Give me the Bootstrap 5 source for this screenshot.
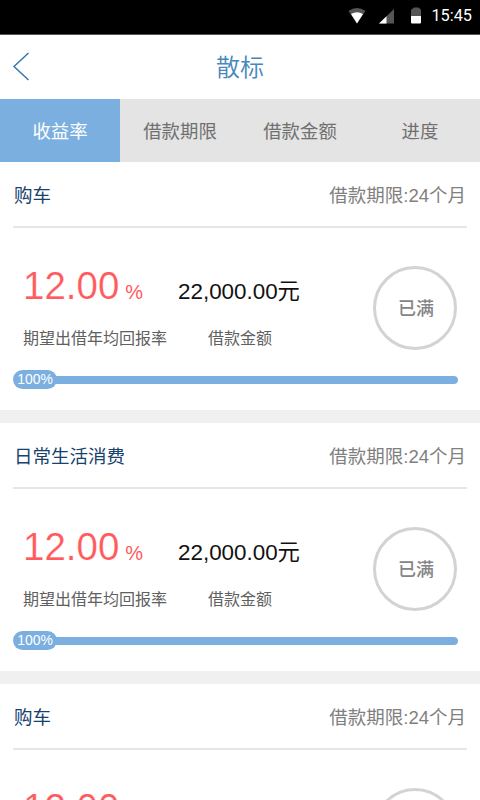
<!DOCTYPE html>
<html lang="zh-CN">
<head>
<meta charset="utf-8">
<meta name="viewport" content="width=device-width, initial-scale=1">
<title>散标</title>
<link href="https://cdn.jsdelivr.net/npm/bootstrap@5.3.0/dist/css/bootstrap.min.css" rel="stylesheet">
<style>
body{font-family:"Liberation Sans","Noto Sans CJK SC",sans-serif;background:#f0f0f0;height:800px;overflow:hidden;line-height:1}
.statusbar{height:35px;background:#000;border-bottom:1px solid #555;padding:0 8px 2px 0;font:400 16.3px/32px Roboto,sans-serif}
.topbar{height:64px;color:#4687bd}
.topbar .back{width:40px}
.topbar h1{font-size:24px;padding:2px 40px 0 0;font-weight:350}
.sort-tabs{height:63px;background:#e4e4e4;font-size:18.4px}
.sort-tabs .nav-link{color:#707070;border-radius:0;padding:3px 0 0}
.sort-tabs .nav-link.active{background:#7bafdf;color:#fff}
main{height:638px;overflow:hidden}
.loan{height:248px;margin-bottom:13px;padding:0 13px}
.loan-head{height:66px;font-size:18.5px;border-bottom:2px solid #e6e6e6;padding:5px 1px 0}
.loan-head .kind{color:#17426c}
.loan-head .term{color:#808080}
.loan-body{height:142px}
.rate{width:155px;color:#ff5a5c;padding:36px 0 0 10px}
.rate .figure{font-size:38.5px;line-height:44px;-webkit-text-stroke:.2px #fff}
.rate .unit{font-size:20px;margin-left:6px;-webkit-text-stroke:0}
.amount{color:#111;padding:37px 0 0 10px}
.amount .figure{font-size:22.4px;line-height:44px;padding-top:5px}
.caption{font-size:16px;line-height:20px;color:#606060;white-space:nowrap;margin-top:15px}
.amount .caption{padding-left:2px}
.seal{width:84px;height:84px;border:3px solid #d3d3d3;color:#858585;font-size:18px;font-weight:500;margin:38px 10px 0 auto;padding:2px 0 0 2px}
.meter{height:19px;margin-right:9px}
.meter .pct{width:44px;height:19px;background:#7bafdf;color:#fff;font-size:13.9px;position:relative;z-index:1;padding-top:1px}
.meter .progress{height:8px;background:#e4e4e4;margin-left:-6px;border-radius:4px}
.meter .progress-bar{background:#7bafdf;border-radius:4px}
</style>
</head>
<body>
<header class="statusbar d-flex align-items-center justify-content-end text-white">
<svg width="88" height="20" viewBox="343 5 88 20" aria-hidden="true">
<path d="M348.500 10Q357 4 365.500 10L357 22.500Z" fill="#555"/><path d="M351 13Q357 9.500 363 13L357 22.500Z" fill="#fff"/>
<path d="M394 8V22.500H379Z" fill="#555"/><path d="M386.500 15.200V22.500H379Z" fill="#fff"/>
<path d="M411 9.500Q411 8 413 7.500Q413 6.500 414.500 6.500H418Q419.500 6.500 419.500 7.500Q421 8 421 9.500V15H411Z" fill="#555"/><path d="M411 15H421V21.500Q421 22.500 420 22.500H412Q411 22.500 411 21.500Z" fill="#fff"/>
</svg>
<span>15:45</span>
</header>
<div class="topbar d-flex align-items-center bg-white">
<a class="back d-flex" href="#" aria-label="返回"><svg width="40" height="40" viewBox="0 0 40 40"><path d="M28.500 6 14 19.500 28.500 33" fill="none" stroke="#3a77ad" stroke-width="1.500"/></svg></a>
<h1 class="flex-fill text-center mb-0">散标</h1>
</div>
<nav class="sort-tabs nav nav-pills nav-justified flex-nowrap">
<a class="nav-link active d-flex align-items-center justify-content-center" href="#">收益率</a>
<a class="nav-link d-flex align-items-center justify-content-center" href="#">借款期限</a>
<a class="nav-link d-flex align-items-center justify-content-center" href="#">借款金额</a>
<a class="nav-link d-flex align-items-center justify-content-center" href="#">进度</a>
</nav>
<main>
<section class="loan bg-white">
<div class="loan-head d-flex align-items-center justify-content-between"><span class="kind">购车</span><span class="term">借款期限:24个月</span></div>
<div class="loan-body d-flex">
<div class="rate"><div class="figure text-nowrap">12.00<span class="unit">%</span></div><div class="caption">期望出借年均回报率</div></div>
<div class="amount text-center"><div class="figure">22,000.00元</div><div class="caption">借款金额</div></div>
<div class="seal rounded-circle d-flex align-items-center justify-content-center">已满</div>
</div>
<div class="meter d-flex align-items-center"><span class="pct rounded-pill d-flex align-items-center justify-content-center">100%</span><div class="progress flex-fill"><div class="progress-bar" style="width:100%"></div></div></div>
</section>
<section class="loan bg-white">
<div class="loan-head d-flex align-items-center justify-content-between"><span class="kind">日常生活消费</span><span class="term">借款期限:24个月</span></div>
<div class="loan-body d-flex">
<div class="rate"><div class="figure text-nowrap">12.00<span class="unit">%</span></div><div class="caption">期望出借年均回报率</div></div>
<div class="amount text-center"><div class="figure">22,000.00元</div><div class="caption">借款金额</div></div>
<div class="seal rounded-circle d-flex align-items-center justify-content-center">已满</div>
</div>
<div class="meter d-flex align-items-center"><span class="pct rounded-pill d-flex align-items-center justify-content-center">100%</span><div class="progress flex-fill"><div class="progress-bar" style="width:100%"></div></div></div>
</section>
<section class="loan bg-white">
<div class="loan-head d-flex align-items-center justify-content-between"><span class="kind">购车</span><span class="term">借款期限:24个月</span></div>
<div class="loan-body d-flex">
<div class="rate"><div class="figure text-nowrap">12.00<span class="unit">%</span></div></div>
<div class="seal rounded-circle"></div>
</div>
</section>
</main>
<script src="https://cdn.jsdelivr.net/npm/bootstrap@5.3.0/dist/js/bootstrap.bundle.min.js"></script>
</body>
</html>
